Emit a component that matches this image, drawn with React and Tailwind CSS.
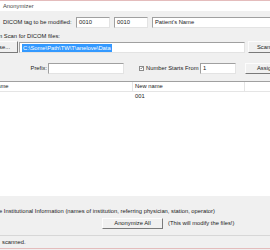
const font = { fontFamily: '"Liberation Sans", Arial, sans-serif' }

const Input = ({ className = '', children }) => (
  <div
    className={`h-[11px] shrink-0 bg-white border border-t-[#a0a0a0] border-l-[#a0a0a0] border-r-[#e3e3e3] border-b-[#e3e3e3] pl-[2px] leading-[9px] text-[5.8px] text-[#222] overflow-hidden whitespace-nowrap ${className}`}
  >
    {children}
  </div>
)

const Btn = ({ className = '', children }) => (
  <div
    className={`h-[11px] shrink-0 bg-[#f0f0f0] border border-t-[#fcfcfc] border-l-[#fcfcfc] border-r-[#7a7a7a] border-b-[#7a7a7a] leading-[9px] text-[5.8px] text-[#222] text-center whitespace-nowrap overflow-hidden ${className}`}
  >
    {children}
  </div>
)

export default function App() {
  return (
    <div className="w-[270px] h-[250px] bg-[#f0f0f0] overflow-hidden flex flex-col text-[5.8px] text-[#222]" style={font}>
      <div className="h-px bg-[#e4bcbc] shrink-0" />
      <div className="h-[10px] bg-white shrink-0 pl-[3px] leading-[10px] text-[#444]">Anonymizer</div>
      <div className="h-[6px] shrink-0" />

      <div className="h-[11px] shrink-0 flex items-center">
        <div className="w-[76px] shrink-0 pl-[3px] whitespace-nowrap">DICOM tag to be modified:</div>
        <Input className="w-[34px]">0010</Input>
        <Input className="w-[34px] ml-[4px]">0010</Input>
        <Input className="w-[130px] ml-[4px]">Patient's Name</Input>
      </div>

      <div className="h-[8px] mt-[4px] shrink-0 leading-[8px] whitespace-nowrap -ml-[1px]">n Scan for DICOM files:</div>

      <div className="h-[12px] mt-[1px] shrink-0 flex items-start">
        <Btn className="w-[40px] -ml-[22px] h-[12px] leading-[10px]">Browse...</Btn>
        <Input className="w-[226px] ml-[1px] mt-[1px] flex items-center">
          <span className="bg-[#3399ff] text-white leading-[8px] px-px">C:\Some\Path\TW\T\anelove\Data</span>
        </Input>
        <Btn className="w-[30px] ml-[3px] h-[12px] leading-[10px] text-left pl-[8px]">Scan</Btn>
      </div>

      <div className="h-[12px] mt-[9px] shrink-0 flex items-center">
        <div className="w-[48px] shrink-0 text-right pr-px">Prefix:</div>
        <Input className="w-[76px]" />
        <div className="w-[5px] h-[5px] ml-[15px] shrink-0 bg-white border border-[#8a8a8a] flex items-center justify-center">
          <svg viewBox="0 0 6 6" className="w-[4px] h-[4px]">
            <path d="M0.8 3 L2.4 4.6 L5.2 1.2" fill="none" stroke="#222" strokeWidth="1" />
          </svg>
        </div>
        <div className="w-[56px] shrink-0 pl-[2px] whitespace-nowrap">Number Starts From</div>
        <Input className="w-[36px]">1</Input>
        <Btn className="w-[32px] ml-[9px] text-left pl-[11px]">Assign</Btn>
      </div>

      <div className="h-[115px] mt-[7px] shrink-0 bg-white border-t border-[#a0a0a0] flex flex-col">
        <div className="h-[10px] shrink-0 flex border-b border-[#e5e5e5] leading-[9px]">
          <div className="w-[133px] shrink-0 border-r border-[#e5e5e5] overflow-hidden whitespace-nowrap">
            <span className="-ml-[7px] inline-block">Name</span>
          </div>
          <div className="w-[112px] shrink-0 border-r border-[#e5e5e5] pl-[2px]">New name</div>
        </div>
        <div className="h-[8px] flex leading-[8px]">
          <div className="w-[133px] shrink-0" />
          <div className="pl-[2px]">001</div>
        </div>
      </div>

      <div className="h-[8px] mt-[11px] shrink-0 leading-[8px] whitespace-nowrap -ml-[1px]">
        e Institutional Information (names of institution, referring physician, station, operator)
      </div>

      <div className="h-[11px] mt-[3px] shrink-0 flex items-center">
        <Btn className="w-[61px] ml-[102px]">Anonymize All</Btn>
        <div className="ml-[5px] whitespace-nowrap">(This will modify the files!)</div>
      </div>

      <div className="h-[13px] mt-[6px] shrink-0 border-t border-[#d7d7d7] leading-[12px] pl-[2px] whitespace-nowrap">
        scanned.
      </div>
      <div className="h-px bg-[#e4bcbc] shrink-0" />
    </div>
  )
}
